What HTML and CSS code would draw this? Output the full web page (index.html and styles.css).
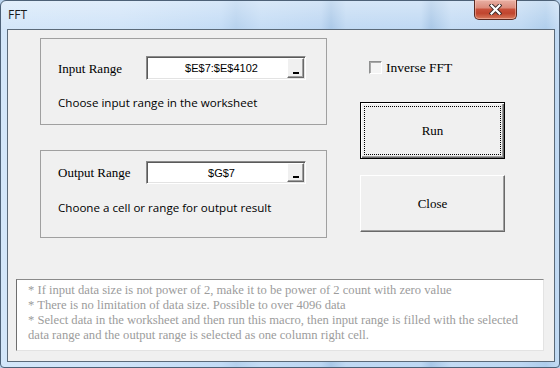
FILE: index.html
```html
<!DOCTYPE html>
<html>
<head>
<meta charset="utf-8">
<link rel="stylesheet" href="styles.css">
</head>
<body>
<div class="window">
  <div class="titlebar">
    <span class="title">FFT</span>
    <div class="close-btn">
      <svg width="13" height="11" viewBox="0 0 13 11">
        <path d="M2.5 1.5 L10.5 9.5 M10.5 1.5 L2.5 9.5" stroke="#3b2a28" stroke-width="4" stroke-linecap="square"/>
        <path d="M2.5 1.5 L10.5 9.5 M10.5 1.5 L2.5 9.5" stroke="#ffffff" stroke-width="2.2" stroke-linecap="square"/>
      </svg>
    </div>
  </div>
  <div class="client">
    <div class="top">
      <div class="frames">
        <div class="frame frame-input">
          <div class="field-row">
            <span class="label">Input Range</span>
            <div class="refedit">
              <span class="ref-value">$E$7:$E$4102</span>
              <span class="ref-btn"><span class="underscore"></span></span>
            </div>
          </div>
          <p class="hint">Choose input range in the worksheet</p>
        </div>
        <div class="frame frame-output">
          <div class="field-row">
            <span class="label">Output Range</span>
            <div class="refedit">
              <span class="ref-value">$G$7</span>
              <span class="ref-btn"><span class="underscore"></span></span>
            </div>
          </div>
          <p class="hint">Choone a cell or range for output result</p>
        </div>
      </div>
      <div class="side">
        <label class="check"><span class="box"></span><span>Inverse FFT</span></label>
        <div class="btn btn-default"><span class="focus">Run</span></div>
        <div class="btn">Close</div>
      </div>
    </div>
    <div class="notes">
      <p>* If input data size is not power of 2, make it to be power of 2 count with zero value</p>
      <p>* There is no limitation of data size. Possible to over 4096 data</p>
      <p>* Select data in the worksheet and then run this macro, then input range is filled with the selected data range and the output range is selected as one column right cell.</p>
    </div>
  </div>
</div>
</body>
</html>
```
FILE: styles.css
```css
* { box-sizing: border-box; }
html, body { margin: 0; padding: 0; }
body { width: 560px; height: 368px; overflow: hidden; background: #b9d3ee; }

.window {
  width: 560px;
  height: 368px;
  border: 1px solid #4d6177;
  border-radius: 6px 6px 4px 4px;
  background:
    linear-gradient(180deg, rgba(255,255,255,0.35) 0px, rgba(255,255,255,0) 30px),
    linear-gradient(90deg, #d3e6f9 0px, #cfe3f8 120px, #c2dbf5 220px, #b5d1ee 235px, #c4dcf5 260px, #bcd6f2 320px, #a9c8e8 330px, #c0d9f3 345px, #bed8f3 420px, #a8c7e7 430px, #c3dbf4 450px, #bdd7f2 520px, #aecdec 545px, #c8def5 560px);
  display: flex;
  flex-direction: column;
  font-family: "Liberation Serif", serif;
}

.titlebar {
  height: 28px;
  display: flex;
  align-items: flex-start;
}
.title {
  font-family: "Open Sans", "Noto Sans", sans-serif;
  font-size: 12px;
  color: #1a1a1a;
  margin: 6px 0 0 7px;
  line-height: 16px;
}
.close-btn {
  margin: -1px 42px 0 auto;
  width: 43px;
  height: 20px;
  border: 1px solid #5a2a22;
  border-top: none;
  border-radius: 0 0 5px 5px;
  background: linear-gradient(180deg, #e8b0a4 0%, #dc8c7c 40%, #c8503a 50%, #c0452e 70%, #d87a5c 100%);
  box-shadow: inset 0 0 0 1px rgba(255,210,200,0.45);
  display: flex;
  align-items: center;
  justify-content: center;
}

.client {
  margin-left: 6px;
  width: 548px;
  height: 333px;
  border: 1px solid #5b6a79;
  background: #f0f0f0;
  display: flex;
  flex-direction: column;
}

.top {
  display: flex;
  padding: 8px 0 0 32px;
}
.frames {
  width: 287px;
  display: flex;
  flex-direction: column;
  gap: 25px;
}
.frame {
  border: 1px solid #a0a0a0;
  padding-left: 17px;
}
.frame-input { height: 87px; padding-top: 17px; }
.frame-output { height: 88px; padding-top: 10px; }
.field-row { display: flex; align-items: flex-start; }
.label {
  width: 88px;
  font-size: 13px;
  line-height: 16px;
  color: #000;
  margin-top: 5px;
}
.frame-output .label { margin-top: 4px; }
.refedit {
  width: 160px;
  height: 24px;
  border: 1px solid;
  border-color: #8a8a8a #ffffff #ffffff #8a8a8a;
  box-shadow: inset 1px 1px 0 #5a5a5a, inset -1px -1px 0 #e3e3e3;
  background: #fff;
  display: flex;
  padding: 1px;
}
.frame-output .refedit { height: 23px; }
.ref-value {
  flex: 1;
  font-family: "Liberation Sans", Arial, sans-serif;
  font-size: 11px;
  color: #000;
  text-align: center;
  padding-left: 8px;
  display: flex;
  align-items: center;
  justify-content: center;
}
.ref-btn {
  width: 17px;
  background: #f0f0f0;
  border: 1px solid;
  border-color: #ffffff #696969 #696969 #ffffff;
  box-shadow: inset -1px -1px 0 #a0a0a0;
  display: flex;
  align-items: flex-end;
  justify-content: center;
  padding-bottom: 3px;
}
.underscore { width: 6px; height: 2px; background: #000; }
.hint {
  margin: 15px 0 0 0;
  font-family: "Open Sans", "Noto Sans", sans-serif;
  font-size: 11.6px;
  line-height: 16px;
  color: #000;
}
.frame-output .hint { margin-top: 16px; }

.side {
  margin-left: 33px;
  width: 145px;
  padding-top: 23px;
  display: flex;
  flex-direction: column;
}
.check {
  display: flex;
  align-items: center;
  gap: 4px;
  margin-left: 9px;
  font-size: 13.5px;
  line-height: 16px;
  height: 13px;
  color: #000;
}
.box {
  width: 13px;
  height: 13px;
  border: 1px solid;
  border-color: #8e8f8f #ffffff #ffffff #8e8f8f;
  box-shadow: inset 1px 1px 0 #a8a8a8;
  background: #f4f4f4;
}
.btn {
  height: 57px;
  border: 1px solid;
  border-color: #ffffff #696969 #696969 #ffffff;
  box-shadow: inset -1px -1px 0 #a0a0a0;
  background: #f0f0f0;
  display: flex;
  align-items: center;
  justify-content: center;
  font-size: 13px;
  color: #000;
  margin-top: 16px;
}
.btn-default {
  margin-top: 28px;
  border-color: #000;
  box-shadow: inset 1px 1px 0 #fff, inset -1px -1px 0 #696969, inset -2px -2px 0 #a0a0a0;
  padding: 3px;
}
.focus {
  width: 100%;
  height: 100%;
  border: 1px dotted #000;
  display: flex;
  align-items: center;
  justify-content: center;
}

.notes {
  margin: 41px 0 0 8px;
  width: 528px;
  height: 72px;
  border: 1px solid;
  border-color: #8a8a8a #e3e3e3 #e3e3e3 #6e6e6e;
  background: #fff;
  padding: 3px 6px 0 11px;
  font-size: 12.6px;
  line-height: 15px;
  color: #9c9c9c;
}
.notes p { margin: 0; }
```
